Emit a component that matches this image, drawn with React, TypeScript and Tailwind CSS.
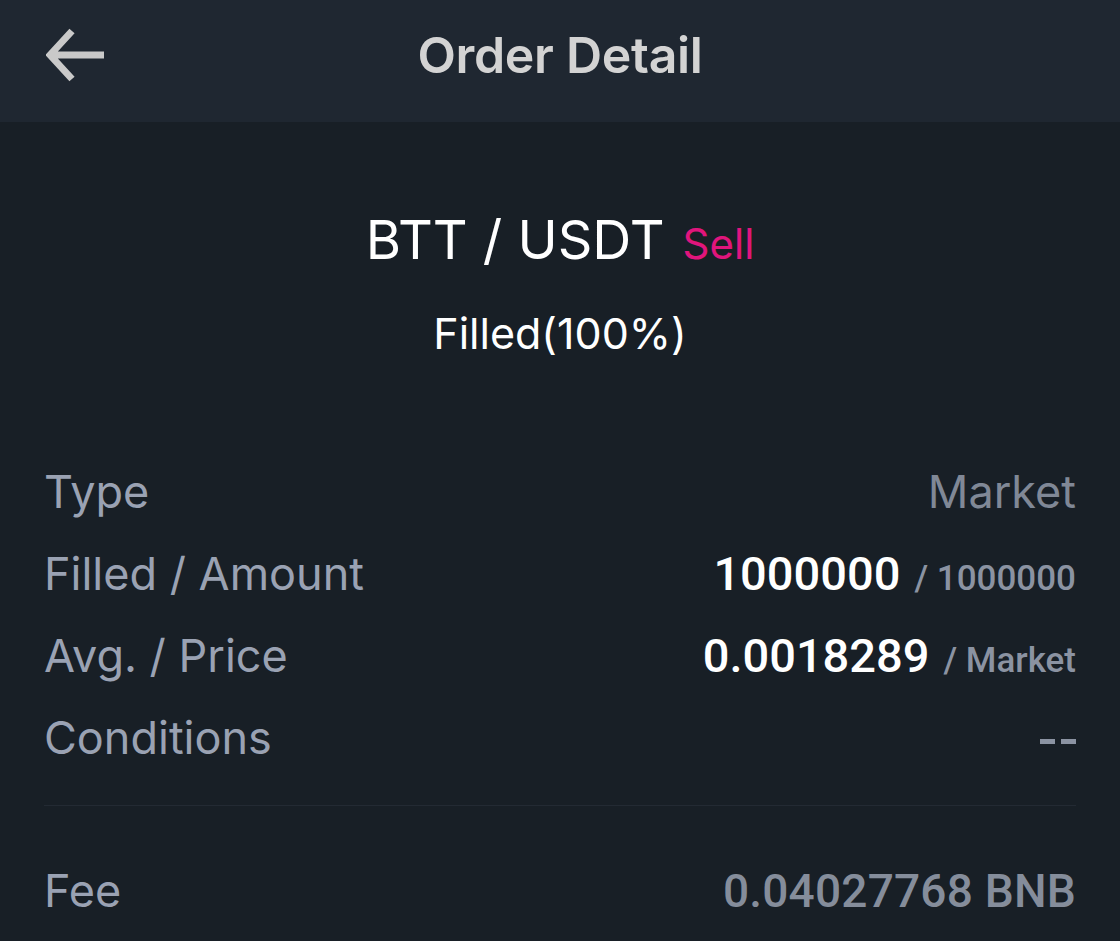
const rows = [
  { label: 'Type', kind: 'text', value: 'Market' },
  { label: 'Filled / Amount', kind: 'pair', main: '1000000', sub: '1000000' },
  { label: 'Avg. / Price', kind: 'pair', main: '0.0018289', sub: 'Market' },
  { label: 'Conditions', kind: 'dash' },
];

const BackArrow = () => (
  <svg width="60" height="56" viewBox="0 0 60 56" fill="none" className="text-[#c9c9c9]">
    <path d="M26 4 L4 28 L26 52 M4 28 H58" stroke="currentColor" strokeWidth="7" />
  </svg>
);

export default function App() {
  return (
    <div className="min-h-screen bg-[#181f26] font-['Inter',sans-serif]">
      {/* Header */}
      <header className="grid h-[122px] grid-cols-[1fr_auto_1fr] items-center bg-[#1f2731] px-[44px] pb-[12px]">
        <button aria-label="Back" className="justify-self-start pl-[2px]">
          <BackArrow />
        </button>
        <h1 className="text-[50px] font-semibold tracking-[-0.3px] text-[#d3d3d3]">Order Detail</h1>
        <div />
      </header>

      <main className="px-[44px]">
        {/* Pair */}
        <div className="mt-[77px] flex items-baseline justify-center leading-[82px]">
          <span className="text-[54px] text-white">BTT / USDT</span>
          <span className="ml-[18px] text-[42px] text-[#e0157c]">Sell</span>
        </div>
        <div className="mt-[18px] text-center text-[43px] leading-[60px] text-white">Filled(100%)</div>

        {/* Details */}
        <div className="mt-[88px] flex flex-col">
          {rows.map((row) => (
            <div key={row.label} className="flex h-[82px] items-center justify-between">
              <span className="text-[45px] text-[#9aa2b3]">{row.label}</span>
              {row.kind === 'text' && <span className="text-[45px] text-[#808896]">{row.value}</span>}
              {row.kind === 'pair' && (
                <span className="flex items-baseline font-['Roboto',sans-serif]">
                  <span className="text-[47px] font-medium text-white">{row.main}</span>
                  <span className="ml-[14px] text-[35px] font-medium text-[#8b93a2]">/ {row.sub}</span>
                </span>
              )}
              {row.kind === 'dash' && (
                <span className="flex gap-[6px] pt-[6px]">
                  <span className="h-[5px] w-[15px] bg-[#8b93a2]" />
                  <span className="h-[5px] w-[15px] bg-[#8b93a2]" />
                </span>
              )}
            </div>
          ))}
        </div>

        <div className="mt-[26px] border-t border-[#232a33]" />

        <div className="mt-[44px] flex h-[82px] items-center justify-between">
          <span className="text-[45px] text-[#9aa2b3]">Fee</span>
          <span className="font-['Roboto',sans-serif] text-[46px] font-medium tracking-[0.2px] text-[#858d9b]">0.04027768 BNB</span>
        </div>
      </main>
    </div>
  );
}
